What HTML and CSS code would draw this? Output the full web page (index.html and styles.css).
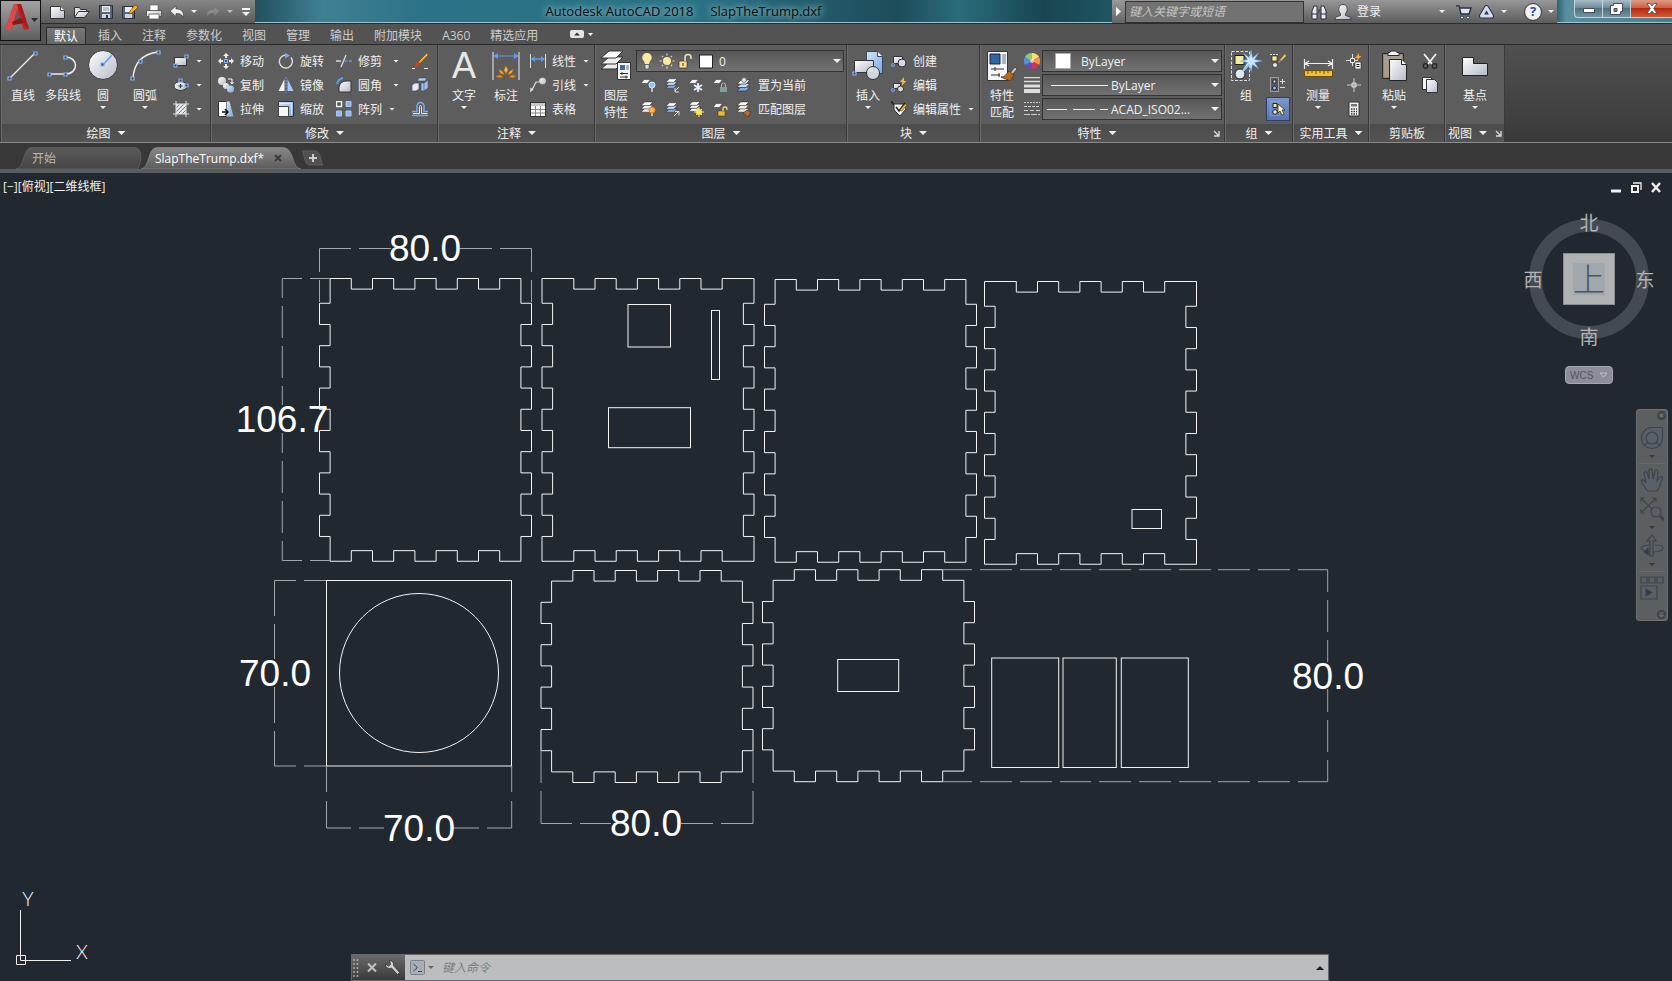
FILE: index.html
```html
<!DOCTYPE html>
<html lang="zh-CN">

<head>
    <meta charset="utf-8">
    <title>Autodesk AutoCAD 2018 SlapTheTrump.dxf</title>
    <link rel="stylesheet" href="styles.css">
</head>

<body>
    <!-- shared gradients and icon parts -->
    <svg class="defs" width="0" height="0" aria-hidden="true">
        <defs>
            <linearGradient id="silver" x1="0" y1="0" x2="1" y2="1">
                <stop offset="0" stop-color="#ffffff" />
                <stop offset="1" stop-color="#b4bac8" />
            </linearGradient>
            <linearGradient id="blue" x1="0" y1="0" x2="1" y2="1">
                <stop offset="0" stop-color="#d5e6fb" />
                <stop offset="1" stop-color="#7da7e0" />
            </linearGradient>
            <linearGradient id="gold" x1="0" y1="0" x2="0" y2="1">
                <stop offset="0" stop-color="#ffd75a" />
                <stop offset="1" stop-color="#e08a12" />
            </linearGradient>
            <linearGradient id="tabOff" x1="0" y1="0" x2="0" y2="1">
                <stop offset="0" stop-color="#5a5a5a" />
                <stop offset="1" stop-color="#454545" />
            </linearGradient>
            <linearGradient id="tabOn" x1="0" y1="0" x2="0" y2="1">
                <stop offset="0" stop-color="#888888" />
                <stop offset="1" stop-color="#5c5c5c" />
            </linearGradient>
            <symbol id="node" viewBox="0 0 5 5">
                <path d="M1 1h3v3h-3z" fill="#3a4454" stroke="#86b4f7" stroke-width="1.2" />
            </symbol>
            <symbol id="sheet" viewBox="0 0 16 16">
                <path d="M5 3h8l-4 5h-8z" fill="#f4f4f4" stroke="#333" stroke-width=".7" />
            </symbol>
            <symbol id="sheets" viewBox="0 0 16 16">
                <path d="M5 9h9l-4 4h-9z" fill="#f4f4f4" stroke="#333" stroke-width=".7" />
                <path d="M5 5.500h9l-4 4h-9z" fill="#f4f4f4" stroke="#333" stroke-width=".7" />
                <path d="M5 2h9l-4 4h-9z" fill="#fff" stroke="#333" stroke-width=".7" />
            </symbol>
            <symbol id="sheetsBlue" viewBox="0 0 16 16">
                <path d="M5 9h9l-4 4h-9z" fill="#7fabe8" stroke="#333" stroke-width=".7" />
                <path d="M5 5.500h9l-4 4h-9z" fill="#c9dcf5" stroke="#333" stroke-width=".7" />
                <path d="M5 2h9l-4 4h-9z" fill="#fff" stroke="#333" stroke-width=".7" />
            </symbol>
        </defs>
    </svg>

    <header class="top">
        <button class="app-button" aria-label="应用程序菜单">
            <svg width="39" height="39" viewBox="0 0 39 39">
                <path d="M4 29L13 3h7l8 25-5 1-3-7-8 2-2 5z" fill="#c4262c" />
                <path d="M13 3l5 1-8 25H4z" fill="#e0474a" />
                <path d="M11 21l9-4 3 5-11 2z" fill="#8d1519" />
                <path d="M16 9l3 8-6 3z" fill="#62595a" />
                <path d="M20 3l8 25-4-3-8-21z" fill="#a51b20" />
                <path d="M30 17h7l-3.500 4z" fill="#222b38" />
            </svg>
        </button>

        <div class="titlebar">
            <div class="quick">
                <button aria-label="新建"><svg width="18" height="16" viewBox="0 0 18 16"><path d="M1.500 2.500h10l4 4v8h-14z" fill="url(#silver)" stroke="#333" /><path d="M11.500 2.500v4h4" fill="#fff" stroke="#555" /></svg></button>
                <button aria-label="打开"><svg width="18" height="16" viewBox="0 0 18 16"><path d="M1.500 13.500v-10h5l1 2h6v2" fill="#dfe3ea" stroke="#333" /><path d="M1.500 13.500l4-6h11l-5 6z" fill="url(#silver)" stroke="#333" /></svg></button>
                <button aria-label="保存"><svg width="18" height="16" viewBox="0 0 18 16"><path d="M2.500 1.500h13v13h-13z" fill="#5d6676" stroke="#2b2f38" /><path d="M5 2h8v6h-8z" fill="#eceff4" /><path d="M6 4h6M6 6h6" stroke="#8a93a3" /><path d="M5 10h8v4h-8z" fill="#cfd5df" /><path d="M9 11h2v3h-2z" fill="#2b2f38" /></svg></button>
                <button aria-label="另存为"><svg width="18" height="16" viewBox="0 0 18 16"><path d="M1.500 2.500h12v12h-12z" fill="#5d6676" stroke="#2b2f38" /><path d="M4 3h7v5h-7z" fill="#eceff4" /><path d="M4 10h7v4h-7z" fill="#cfd5df" /><path d="M8 10l1-3 5-6 3 2-6 6z" fill="#f0b429" stroke="#7a4a0c" stroke-width=".7" /></svg></button>
                <button aria-label="打印"><svg width="18" height="16" viewBox="0 0 18 16"><path d="M5 1h8v6h-8z" fill="#fff" stroke="#666" stroke-width=".7" /><path d="M1.500 6.500h15v6h-15z" fill="url(#silver)" stroke="#444" stroke-width=".8" /><path d="M4 10h10v5h-10z" fill="#fff" stroke="#555" stroke-width=".8" /></svg></button>
                <button aria-label="放弃"><svg width="16" height="16" viewBox="0 0 16 16"><path d="M1 7l6-5v3c5 0 8 2 7.500 9-1.500-3.500-3-4.500-7.500-4.500v3z" fill="#f2f2f2" stroke="#444" stroke-width=".7" /></svg></button>
                <i class="caret"></i>
                <button class="dim" aria-label="重做"><svg width="16" height="16" viewBox="0 0 16 16"><path d="M15 7l-6-5v3c-5 0-8 2-7.500 9 1.500-3.500 3-4.500 7.500-4.500v3z" fill="#9b9b9b" stroke="#666" stroke-width=".7" /></svg></button>
                <i class="caret dim"></i>
                <button aria-label="自定义快速访问工具栏"><svg width="10" height="10" viewBox="0 0 10 10"><path d="M1 1h8v2h-8zM1 5h8l-4 4z" fill="#f5f5f5" /></svg></button>
            </div>
            <div class="aero caption"><span>Autodesk AutoCAD 2018</span><span>SlapTheTrump.dxf</span></div>
            <div class="infocenter">
                <button class="fold" aria-label="折叠搜索"><svg width="5" height="9" viewBox="0 0 5 9"><path d="M0 0l5 4.500-5 4.500z" fill="#fff" /></svg></button>
                <input type="search" class="search" aria-label="搜索" placeholder="键入关键字或短语">
                <button aria-label="查找"><svg width="18" height="16" viewBox="0 0 18 16"><path d="M2 15V7l2-5h3v13zM11 15V2h3l2 5v8z" fill="#e7ebf1" stroke="#2c2f36" /><path d="M7 5h4v4h-4z" fill="#555b66" /><path d="M2 10h5M11 10h5" stroke="#2c2f36" /></svg></button>
                <button class="login"><svg width="18" height="16" viewBox="0 0 18 16"><path d="M1 15.500c0-3 3-3 5.500-4l0-2c-3-3-2-9 2.500-9s5.500 6 2.500 9l0 2c2.500 1 5.500 1 5.500 4z" fill="url(#silver)" stroke="#333" stroke-width=".8" /></svg>登录</button>
                <i class="caret"></i>
                <button class="cart" aria-label="Autodesk App Store"><svg width="17" height="16" viewBox="0 0 17 16"><path d="M1 2h3l2 8h8l2-6h-11" fill="#dfe4ee" stroke="#26314f" stroke-width="1.400" /><circle cx="7" cy="13.500" r="1.500" fill="#fff" stroke="#26314f" /><circle cx="13" cy="13.500" r="1.500" fill="#fff" stroke="#26314f" /></svg></button>
                <button aria-label="Autodesk 360"><svg width="17" height="16" viewBox="0 0 17 16"><path d="M8.500 3.500l5 8.500h-10z" fill="none" stroke="#26314f" stroke-width="5" stroke-linejoin="round" /><path d="M8.500 3.500l5 8.500h-10z" fill="none" stroke="#d5dcea" stroke-width="3" stroke-linejoin="round" /></svg></button>
                <i class="caret"></i>
                <button class="help" aria-label="帮助">?</button>
                <i class="caret"></i>
            </div>
            <div class="aero window-buttons">
                <button aria-label="最小化"><svg width="12" height="12" viewBox="0 0 12 12"><path d="M.5 5.500h11v4h-11z" fill="#fff" stroke="#434b5c" /></svg></button>
                <button aria-label="还原"><svg width="13" height="12" viewBox="0 0 13 12"><path d="M3.500.5h9v8h-2v3h-10v-9h3z" fill="#fff" stroke="#434b5c" /><path d="M4 5.500h3v3h-3z" fill="#75879c" stroke="#434b5c" /></svg></button>
                <button class="close" aria-label="关闭"><svg width="12" height="11" viewBox="0 0 12 11"><path d="M1 .5h3l2 2.500 2-2.500h3l-3.300 5 3.300 5h-3l-2-2.500-2 2.500h-3l3.300-5z" fill="#fff" stroke="#54403f" stroke-width=".8" /></svg></button>
            </div>
        </div>

        <nav class="ribbon-tabs">
            <a href="#" class="active">默认</a>
            <a href="#">插入</a>
            <a href="#">注释</a>
            <a href="#">参数化</a>
            <a href="#">视图</a>
            <a href="#">管理</a>
            <a href="#">输出</a>
            <a href="#">附加模块</a>
            <a href="#">A360</a>
            <a href="#">精选应用</a>
            <button aria-label="最小化功能区"><svg width="24" height="8" viewBox="0 0 24 8"><rect width="14" height="8" rx="2" fill="#e6e6e6" /><path d="M4 5.500h6l-3-3z" fill="#333" /><path d="M18 3h5l-2.500 3z" fill="#fff" /></svg></button>
        </nav>
    </header>

    <main class="ribbon">
        <section class="panel draw">
            <div class="tools">
                <button class="big"><svg width="32" height="32" viewBox="0 0 32 32"><path d="M3 29L28 4" stroke="#eee" stroke-width="1.300" /><use href="#node" x="0" y="27" width="5" height="5" /><use href="#node" x="26" y="2" width="5" height="5" /></svg>直线</button>
                <button class="big"><svg width="32" height="32" viewBox="0 0 32 32"><path d="M2 25h16c14 0 14-17 0-17" fill="none" stroke="#eee" stroke-width="1.500" /><use href="#node" x="0" y="23" width="5" height="5" /><use href="#node" x="16" y="23" width="5" height="5" /><use href="#node" x="16" y="6" width="5" height="5" /></svg>多段线</button>
                <button class="big"><svg width="32" height="32" viewBox="0 0 32 32"><circle cx="16" cy="16" r="14.500" fill="url(#silver)" stroke="#3b3b3b" /><path d="M16 16l9-10" stroke="#5d9cf3" stroke-width="1.500" /><use href="#node" x="13" y="13" width="5" height="5" /></svg>圆<i class="caret"></i></button>
                <button class="big arc"><svg width="32" height="32" viewBox="0 0 32 32"><path d="M4 29C5 14 14 5 29 3" fill="none" stroke="#eee" stroke-width="1.500" /><use href="#node" x="1" y="27" width="5" height="5" /><use href="#node" x="9" y="10" width="5" height="5" /><use href="#node" x="27" y="1" width="5" height="5" /></svg>圆弧<i class="caret"></i></button>
                <div class="rows">
                    <button class="tool" aria-label="矩形"><svg width="16" height="16" viewBox="0 0 16 16"><path d="M1.500 4.500h12v8h-12z" fill="url(#silver)" stroke="#333" /><use href="#node" x="11" y="1" width="5" height="5" /><use href="#node" x="0" y="10" width="5" height="5" /></svg><i class="caret"></i></button>
                    <button class="tool" aria-label="椭圆"><svg width="16" height="16" viewBox="0 0 16 16"><ellipse cx="7.500" cy="9" rx="6.500" ry="4.500" fill="url(#silver)" stroke="#333" /><path d="M5.500 9h4M7.500 7v4" stroke="#333" /><use href="#node" x="5" y="1" width="5" height="5" /><use href="#node" x="11" y="6" width="5" height="5" /></svg><i class="caret"></i></button>
                    <button class="tool" aria-label="图案填充"><svg width="16" height="16" viewBox="0 0 16 16"><path d="M3 3h10v10h-10z" fill="#e3e8f2" /><path d="M3 7l4-4M3 11l8-8M5 13l8-8M9 13l4-4" stroke="#4b7fd0" /><path d="M3 0v16M13 0v16M0 3h16M0 13h16" stroke="#ddd" /></svg><i class="caret"></i></button>
                </div>
            </div>
            <h2><button>绘图<i class="caret wide"></i></button></h2>
        </section>

        <section class="panel modify">
            <div class="tools">
                <div class="rows four">
                    <button class="tool"><svg width="16" height="16" viewBox="0 0 16 16"><path d="M8 0l3 3h-6zM8 16l3-3h-6zM0 8l3-3v6zM16 8l-3-3v6z" fill="#eee" /><path d="M8 3v2M8 11v2M3 8h2M11 8h2" stroke="#eee" stroke-width="2" /><use href="#node" x="5.500" y="5.500" width="5" height="5" /></svg>移动</button>
                    <button class="tool"><svg width="16" height="16" viewBox="0 0 16 16"><path d="M8 2a6.500 6.500 0 1 0 5 2.500" fill="none" stroke="#ddd" stroke-width="1.400" /><path d="M7 0l5 2.500-5 3z" fill="#78a9f0" /></svg>旋转</button>
                    <button class="tool"><svg width="16" height="16" viewBox="0 0 16 16"><path d="M0 8h5M5 14L10 2" stroke="#ddd" stroke-width="1.300" fill="none" /><path d="M8.500 8h3M13 8h3" stroke="#5d9cf3" stroke-width="1.500" /></svg>修剪<i class="caret"></i></button>
                    <button class="tool" aria-label="删除"><svg width="16" height="16" viewBox="0 0 16 16"><path d="M0 15.500h3M12 15.500h4" stroke="#eee" /><path d="M15 0l1 2-8 9-2-2z" fill="url(#gold)" stroke="#5a3508" stroke-width=".5" /><path d="M8 11l-2-2c-2 0-3 3-4 5 3 0 5-1 6-3z" fill="#c5471c" /></svg></button>
                    <button class="tool"><svg width="16" height="16" viewBox="0 0 16 16"><circle cx="4" cy="4" r="4" fill="url(#silver)" /><circle cx="8" cy="9" r="3" fill="url(#silver)" /><circle cx="12.500" cy="12" r="3.500" fill="url(#blue)" /><path d="M10 2h4v4M12.500 5l1.500 2 1.500-2" fill="none" stroke="#fff" /></svg>复制</button>
                    <button class="tool"><svg width="16" height="16" viewBox="0 0 16 16"><path d="M6.500 2v12h-6z" fill="#f1f1f1" /><path d="M9.500 2v12h6z" fill="#a9c8f2" /><path d="M8 0v16" stroke="#5d9cf3" stroke-dasharray="2 1" /></svg>镜像</button>
                    <button class="tool"><svg width="16" height="16" viewBox="0 0 16 16"><path d="M3 15V10a7 7 0 0 1 7-6h5v11z" fill="url(#silver)" stroke="#333" /><path d="M1 7a8 8 0 0 1 6-6" fill="none" stroke="#5d9cf3" stroke-width="2" /></svg>圆角<i class="caret"></i></button>
                    <button class="tool" aria-label="分解"><svg width="16" height="16" viewBox="0 0 16 16"><path d="M0 8l3-2h4v6l-3 2h-4z" fill="#e4e9f3" stroke="#345" stroke-width=".6" /><path d="M5 4l2-3h8l-2 3z" fill="#b7cdf0" stroke="#345" stroke-width=".6" /><path d="M9 6h3l4-3v8l-4 3h-3z" fill="#a4c2ee" stroke="#345" stroke-width=".6" /><path d="M12 6v8" stroke="#345" stroke-width=".6" /></svg></button>
                    <button class="tool"><svg width="16" height="16" viewBox="0 0 16 16"><path d="M.5.5h8v15h-8z" fill="#fff" stroke="#333" /><path d="M8.500.5l3 0 4 15h-7z" fill="url(#blue)" /><path d="M4 11h5M7 8l3 3-3 3" fill="none" stroke="#111" stroke-width="1.500" /></svg>拉伸</button>
                    <button class="tool"><svg width="16" height="16" viewBox="0 0 16 16"><path d="M.5.5h15v15h-15z" fill="url(#blue)" stroke="#333" /><path d="M.5 5.500h10v10h-10z" fill="#f7f7f7" stroke="#444" /><path d="M2 2.500h11.500v11" fill="none" stroke="#dcebff" /></svg>缩放</button>
                    <button class="tool tight"><svg width="16" height="16" viewBox="0 0 16 16"><path d="M.5.5h5v5h-5z" fill="#555" stroke="#f2f2f2" stroke-width="1.500" /><path d="M10 .5h5v5h-5zM.5 10h5v5h-5zM10 10h5v5h-5z" fill="#8db7f0" stroke="#a8caf7" /></svg>阵列<i class="caret"></i></button>
                    <button class="tool" aria-label="偏移"><svg width="16" height="16" viewBox="0 0 16 16"><path d="M0 14.500h16M0 11.500v-1h5V5a3.500 3.500 0 0 1 7 0v5.500h4" fill="none" stroke="#79a9ef" stroke-width="1.500" /><path d="M1 12.500h6.500V5.500a1 1 0 0 1 2 0v7h6" fill="none" stroke="#e6e6e6" /></svg></button>
                </div>
            </div>
            <h2><button>修改<i class="caret wide"></i></button></h2>
        </section>

        <section class="panel annotate">
            <div class="tools">
                <button class="big"><svg width="32" height="32" viewBox="0 0 32 32"><text x="16" y="29" class="glyph-a">A</text></svg>文字<i class="caret"></i></button>
                <button class="big"><svg width="32" height="32" viewBox="0 0 32 32"><path d="M3 3v28M29 3v28" stroke="#ccc" stroke-width="1.300" /><path d="M4 7h24M8 4.500L4 7l4 2.500M24 4.500L28 7l-4 2.500" stroke="#5d9cf3" fill="#5d9cf3" /><path d="M16 17l2 4-2 4-2-4zM9 20l4 3 1 3-4-2zM23 20l-4 3-1 3 4-2zM6 27l4-1 3 2-4 1zM26 27l-4-1-3 2 4 1z" fill="url(#gold)" stroke="#c85a10" stroke-width=".5" /></svg>标注</button>
                <div class="rows">
                    <button class="tool"><svg width="16" height="16" viewBox="0 0 16 16"><path d="M.5 1v14M15.500 1v14" stroke="#ddd" /><path d="M2 6h12" stroke="#5d9cf3" stroke-width="1.500" /><path d="M1 6l4-3v6zM15 6l-4-3v6z" fill="#5d9cf3" /></svg>线性<i class="caret"></i></button>
                    <button class="tool"><svg width="16" height="16" viewBox="0 0 16 16"><circle cx="12.500" cy="4" r="3" fill="url(#silver)" stroke="#ccc" /><path d="M9 5h-3l-4 8" stroke="#ddd" fill="none" stroke-width="1.200" /><path d="M0 15.500l.5-5 3 2z" fill="#ddd" /></svg>引线<i class="caret"></i></button>
                    <button class="tool"><svg width="16" height="16" viewBox="0 0 16 16"><path d="M.5 1.500h15v14h-15z" fill="#f6f6f6" stroke="#333" /><path d="M1 2h14v3h-14z" fill="#c2c6cf" /><path d="M5.500 5v10M10.500 5v10M1 8.500h14M1 12h14" stroke="#888" /></svg>表格</button>
                </div>
            </div>
            <h2><button>注释<i class="caret wide"></i></button></h2>
        </section>

        <section class="panel layers">
            <div class="tools">
                <button class="big"><svg width="32" height="32" viewBox="0 0 32 32"><path d="M8 14h14l-6 6h-15z" fill="#eee" stroke="#333" /><path d="M9 8h14l-7 7h-15z" fill="#eee" stroke="#333" /><path d="M9 2h14l-7 7h-15z" fill="#fff" stroke="#333" /><path d="M17.500 13.500h13v17h-13z" fill="#f5f7fa" stroke="#333" /><path d="M20 16h5v5h-5z" fill="#3b6da8" /><path d="M26 16h3v5h-3z" fill="#aab6c8" /><path d="M20 24.500h8M20 28h8M22 23v3M26 26.500v3" stroke="#333" /></svg>图层<br>特性</button>
                <div class="layer-side">
                    <label class="combo">
                        <svg width="76" height="18" viewBox="0 0 76 18"><path d="M7 1a4.500 4.500 0 0 1 3 8l-1 3h-4l-1-3a4.500 4.500 0 0 1 3-8z" fill="#ffe9a0" /><path d="M5 12.500h4v3l-2 2-2-2z" fill="#ddd" stroke="#444" stroke-width=".6" /><circle cx="27" cy="9" r="4" fill="#ffe9a0" /><path d="M27 1.500v2M27 14.500v2M19.500 9h2M32.500 9h2M22 4l1 1M31 13l1 1M32 4l-1 1M22 14l1-1" stroke="#ddd" stroke-width="1.200" /><path d="M39 9h8v7h-8z" fill="#ffe08a" stroke="#333" stroke-width=".7" /><path d="M45 9V5.500a3 3 0 0 1 6 0V7" fill="none" stroke="#f0e4b8" stroke-width="1.500" /><path d="M43 11v3" stroke="#333" /><path d="M59.500 3h13v13h-13z" fill="#fff" stroke="#222" /></svg>
                        <select aria-label="图层"><option>0</option></select>
                    </label>
                    <div class="icon-row">
                        <button aria-label="关"><svg width="16" height="16"><use href="#sheet" width="13" height="13" /><circle cx="12" cy="8" r="3" fill="#8fc1ff" stroke="#dcebff" /><path d="M12 11v4" stroke="#ddd" stroke-width="1.500" /></svg></button>
                        <button aria-label="隔离"><svg width="16" height="16"><use href="#sheetsBlue" width="16" height="14" /><path d="M15 10l-4 4M11 11v4h4" stroke="#ddd" fill="none" /></svg></button>
                        <button aria-label="冻结"><svg width="16" height="16"><use href="#sheet" width="13" height="13" /><path d="M10 6v9M6 8l8 5M14 8l-8 5" stroke="#e8f1ff" stroke-width="1.800" /></svg></button>
                        <button aria-label="锁定"><svg width="16" height="16"><use href="#sheet" width="13" height="13" /><path d="M8 10h7v5h-7z" fill="#7fa09c" /><path d="M9.500 10v-2a2 2 0 0 1 4 0v2" fill="none" stroke="#9fbab6" /></svg></button>
                        <button class="tool"><svg width="16" height="16"><use href="#sheetsBlue" width="16" height="16" y="1" /><circle cx="8" cy="3" r="2.500" fill="#dbe1ea" stroke="#444" stroke-width=".6" /></svg>置为当前</button>
                    </div>
                    <div class="icon-row">
                        <button aria-label="打开所有图层"><svg width="16" height="16"><use href="#sheets" width="15" height="15" y="-1" /><circle cx="12" cy="9" r="3" fill="#ffb347" stroke="#f07d1a" /><path d="M12 12v3" stroke="#ddd" stroke-width="1.500" /></svg></button>
                        <button aria-label="取消隔离"><svg width="16" height="16"><use href="#sheetsBlue" width="16" height="14" /><path d="M10 15l4-4M11 10.500h4v4" stroke="#ddd" fill="none" /></svg></button>
                        <button aria-label="解冻所有图层"><svg width="16" height="16"><use href="#sheets" width="14" height="14" y="-1" /><circle cx="11" cy="11" r="3" fill="#ffe45c" /><path d="M11 6v2M11 14v2M6 11h2M14 11h2M8 8l1 1M14 8l-1 1M8 14l1-1M14 14l-1-1" stroke="#ffe45c" /></svg></button>
                        <button aria-label="解锁"><svg width="16" height="16"><use href="#sheet" width="13" height="13" /><path d="M6 10h7v5h-7z" fill="#f5b52c" stroke="#333" stroke-width=".5" /><path d="M11 10v-2a2 2 0 0 1 4 0v1" fill="none" stroke="#ffd25e" stroke-width="1.300" /></svg></button>
                        <button class="tool"><svg width="16" height="16"><use href="#sheets" width="15" height="15" y="-1" /><path d="M7 12l4-3 4 2-3 5z" fill="#b56a2c" stroke="#4a2a10" stroke-width=".6" /></svg>匹配图层</button>
                    </div>
                </div>
            </div>
            <h2><button>图层<i class="caret wide"></i></button></h2>
        </section>

        <section class="panel block">
            <div class="tools">
                <button class="big"><svg width="32" height="32" viewBox="0 0 32 32"><path d="M14.500 2.500h11l5 5v17h-16z" fill="url(#blue)" stroke="#37475f" /><path d="M25.500 2.500v5h5" fill="#fff" stroke="#37475f" /><path d="M2.500 11.500h19v12h-19z" fill="url(#silver)" stroke="#333" /><circle cx="21" cy="24" r="6.500" fill="#dfe3ea" fill-opacity=".9" stroke="#333" /><use href="#node" x="0" y="22" width="5" height="5" /></svg>插入<i class="caret"></i></button>
                <div class="rows">
                    <button class="tool"><svg width="16" height="16" viewBox="0 0 16 16"><path d="M2.500 3.500h9v7h-9z" fill="url(#silver)" stroke="#333" /><circle cx="11" cy="10" r="4" fill="#d5d9e1" stroke="#333" /><use href="#node" x="0" y="10" width="4" height="4" /></svg>创建</button>
                    <button class="tool"><svg width="16" height="16" viewBox="0 0 16 16"><path d="M2.500 6.500h7v5h-7z" fill="url(#silver)" stroke="#333" /><circle cx="9.500" cy="12" r="3" fill="#d5d9e1" stroke="#333" /><path d="M13 0l-4 5h2.500l-1 4 5-5h-2.500z" fill="#ffb52e" /><use href="#node" x="0" y="11" width="4" height="4" /></svg>编辑</button>
                    <button class="tool"><svg width="16" height="16" viewBox="0 0 16 16"><path d="M0 0l3 4" stroke="#222" stroke-width="1.500" /><path d="M3 3h10l2 5-6 7-6-6z" fill="#f3f3f3" stroke="#333" /><path d="M5 6l3 4 6-8" stroke="#222" stroke-width="1.500" fill="none" /><path d="M9 9l5-6 2 1-5 6z" fill="#f2b43a" stroke="#7b430c" stroke-width=".6" /></svg>编辑属性<i class="caret"></i></button>
                </div>
            </div>
            <h2><button>块<i class="caret wide"></i></button></h2>
        </section>

        <section class="panel props">
            <div class="tools">
                <button class="big"><svg width="32" height="32" viewBox="0 0 32 32"><path d="M1.500 2.500h20v29h-20z" fill="#f3f5f9" stroke="#333" /><path d="M4 5h10v10h-10z" fill="#2f66a5" stroke="#223" /><path d="M16 5h4v10h-4z" fill="#a9b4c6" /><path d="M5 20h13M5 26h9M9 18v4M13 24v4" stroke="#333" /><path d="M29 18l2 2-5 6-2-2z" fill="#d8c4a8" stroke="#333" stroke-width=".7" /><path d="M23 22l5 4-4 6-9-4c4 0 5-3 8-6z" fill="#b8691f" stroke="#4a2608" stroke-width=".7" /></svg>特性<br>匹配</button>
                <div class="prop-grid">
                    <svg width="16" height="16" viewBox="0 0 16 16"><path d="M8 8V0a8 8 0 0 1 7 4z" fill="#ffe06a" /><path d="M8 8l7-4a8 8 0 0 1 0 8z" fill="#f0944e" /><path d="M8 8l7 4a8 8 0 0 1-7 4z" fill="#d2335c" /><path d="M8 8v8a8 8 0 0 1-7-4z" fill="#6f49b8" /><path d="M8 8l-7 4a8 8 0 0 1 0-8z" fill="#4d95dd" /><path d="M8 8L1 4a8 8 0 0 1 7-4z" fill="#8dcc6a" /><circle cx="8" cy="8" r="2" fill="#fff" opacity=".6" /></svg>
                    <label class="combo">
                        <svg width="30" height="16" viewBox="0 0 30 16"><path d="M8.500.5h15v15h-15z" fill="#fff" stroke="#aaa" /></svg>
                        <select aria-label="对象颜色"><option>ByLayer</option></select>
                    </label>
                    <svg width="16" height="16" viewBox="0 0 16 16"><path d="M0 .5h16M0 4.500h16" stroke="#ddd" stroke-width="1.500" /><path d="M0 9h16" stroke="#ddd" stroke-width="3" /><path d="M0 14h16" stroke="#ddd" stroke-width="4" /></svg>
                    <label class="combo">
                        <svg width="61" height="16" viewBox="0 0 61 16"><path d="M4 8.500h57" stroke="#eee" /></svg>
                        <select aria-label="线宽"><option>ByLayer</option></select>
                    </label>
                    <svg width="16" height="16" viewBox="0 0 16 16"><path d="M0 1.500h16" stroke="#ccc" stroke-dasharray="2 1" /><path d="M0 5.500h16" stroke="#ccc" stroke-dasharray="3 1" /><path d="M0 9.500h16" stroke="#ccc" stroke-dasharray="4 2" /><path d="M0 13.500h16" stroke="#ccc" stroke-dasharray="6 1" /></svg>
                    <label class="combo">
                        <svg width="61" height="16" viewBox="0 0 61 16"><path d="M0 8.500h20M26 8.500h22M53 8.500h8" stroke="#eee" /></svg>
                        <select aria-label="线型"><option>ACAD_ISO02...</option></select>
                    </label>
                </div>
            </div>
            <h2><button>特性<i class="caret wide"></i></button><button class="launcher" aria-label="特性选项板"><svg width="7" height="7" viewBox="0 0 7 7"><path d="M1 1l4 4M6 1v5h-5" fill="none" stroke="#ddd" stroke-width="1.300" /></svg></button></h2>
        </section>

        <section class="panel group">
            <div class="tools">
                <button class="big"><svg width="32" height="32" viewBox="0 0 32 32"><path d="M1.500 2.500h18v29h-18z" fill="none" stroke="#ddd" stroke-dasharray="3 1.500" /><path d="M5 6.500h9v9h-9z" fill="#f4ec9a" stroke="#222" /><circle cx="10" cy="25" r="5" fill="#dbe8ee" stroke="#222" /><path d="M13 22l8-9" stroke="#9fd0ff" stroke-width="2" /><path d="M21 1l1.500 8 6-5-4 6.500 8 1.500-8 1.500 4 6-6-4-1.500 7-1.500-7-6 4 4-6-7-1.500 7-1.500-4-6.500 6 5z" fill="#c8e6ff" stroke="#5ba6ee" stroke-width=".5" /></svg>组</button>
                <div class="rows">
                    <button class="tool" aria-label="解除编组"><svg width="16" height="16" viewBox="0 0 16 16"><path d="M0 1.500h9" stroke="#ddd" stroke-dasharray="2 1" /><path d="M2 3h5v5h-5z" fill="#f4ec9a" stroke="#222" stroke-width=".7" /><circle cx="5" cy="12" r="2.500" fill="#dbe8ee" stroke="#222" stroke-width=".7" /><path d="M15 1l1 2-5 5-1-1z" fill="#ffc94a" /><path d="M10 7l1 1-2 2-1-1z" fill="#e66" /></svg></button>
                    <button class="tool" aria-label="组编辑"><svg width="16" height="16" viewBox="0 0 16 16"><path d="M.5.5h8v14h-8z" fill="none" stroke="#ddd" stroke-dasharray="1 1" /><path d="M3 3h3v3h-3z" fill="#eee" stroke="#222" /><circle cx="4.500" cy="11" r="2" fill="#8fc1ff" stroke="#124" /><path d="M10 4.500h5M12.500 2v5M10 10.500h5" stroke="#ddd" /></svg></button>
                    <button class="tool pressed" aria-label="启用/禁用组选择"><svg width="16" height="16" viewBox="0 0 16 16"><path d="M.5.5h9v14h-9z" fill="none" stroke="#78b0ff" stroke-dasharray="1 1" /><path d="M3 2.500h4v4h-4z" fill="#f4ec9a" stroke="#222" /><circle cx="5" cy="11" r="2.300" fill="#dbe8ee" stroke="#222" /><path d="M8 3v9l2-2 2 4 2-1-2-4h3z" fill="#fdf6c8" stroke="#222" stroke-width=".7" /></svg></button>
                </div>
            </div>
            <h2><button>组<i class="caret wide"></i></button></h2>
        </section>

        <section class="panel utils">
            <div class="tools">
                <button class="big"><svg width="32" height="32" viewBox="0 0 32 32"><path d="M2.500 10v10M30.500 10v10M3 14.500h27M7 12l-4 2.500 4 2.500M26 12l4 2.500-4 2.500" stroke="#eee" fill="none" stroke-width="1.200" /><path d="M2.500 21.500h28v6h-28z" fill="#f0c232" stroke="#6b4f0a" /><path d="M6 22v3M10 22v2M14 22v3M18 22v2M22 22v3M26 22v2" stroke="#6b4f0a" /></svg>测量<i class="caret"></i></button>
                <div class="rows">
                    <button class="tool" aria-label="快速选择"><svg width="16" height="16" viewBox="0 0 16 16"><path d="M0 7.500h12M6.500 1v12" stroke="#ddd" /><path d="M4.500 5.500h4v4h-4z" fill="#4c4c4c" stroke="#fff" /><path d="M13 0l-4 5h2.500l-1 3 5-5h-2.500z" fill="#ffa52e" /><path d="M9 9h6v7h-6z" fill="#f4f4f4" stroke="#222" stroke-width=".6" /><path d="M10.500 11.500h3M10.500 13.500h3" stroke="#222" /></svg></button>
                    <button class="tool" aria-label="点样式"><svg width="16" height="16" viewBox="0 0 16 16"><path d="M1 8h14M8 1v14" stroke="#ccc" /><path d="M6 6h4v4h-4z" fill="#aaa" stroke="#ddd" /></svg></button>
                    <button class="tool" aria-label="快速计算器"><svg width="16" height="16" viewBox="0 0 16 16"><path d="M3 1h10v14h-10z" fill="#f1f1f1" stroke="#333" /><path d="M5 3h6v2.500h-6z" fill="#777" /><path d="M5 8h6M5 10.500h6M5 13h6" stroke="#333" stroke-dasharray="1.500 1" stroke-width="1.300" /></svg></button>
                </div>
            </div>
            <h2><button>实用工具<i class="caret wide"></i></button></h2>
        </section>

        <section class="panel clip">
            <div class="tools">
                <button class="big"><svg width="32" height="32" viewBox="0 0 32 32"><path d="M4.500 4.500h21v25h-21z" fill="#8f8478" stroke="#2e2a26" /><path d="M6 6h18v22h-18z" fill="#a89c8e" /><path d="M10 3.500h2l1-1.500h5l1 1.500h2v3h-11z" fill="#f5f5f5" stroke="#2a2a2a" /><path d="M11.500 10.500h12l5 5v16h-17z" fill="url(#silver)" stroke="#222" /><path d="M23.500 10.500v5h5" fill="#fff" stroke="#222" /></svg>粘贴<i class="caret"></i></button>
                <div class="rows">
                    <button class="tool" aria-label="剪切"><svg width="16" height="16" viewBox="0 0 16 16"><path d="M2 1l8 10M14 1L6 11" stroke="#f1f1f1" stroke-width="1.800" /><circle cx="3.500" cy="13" r="2.300" fill="none" stroke="#222" stroke-width="1.200" /><circle cx="12.500" cy="13" r="2.300" fill="none" stroke="#222" stroke-width="1.200" /></svg></button>
                    <button class="tool" aria-label="复制剪裁"><svg width="16" height="16" viewBox="0 0 16 16"><path d="M.5.5h9v12h-9z" fill="#f5f5f5" stroke="#333" /><path d="M4.500 2.500h8l3 3v10h-11z" fill="url(#silver)" stroke="#333" /></svg></button>
                </div>
            </div>
            <h2><button>剪贴板</button></h2>
        </section>

        <section class="panel view">
            <div class="tools">
                <button class="big"><svg width="32" height="32" viewBox="0 0 32 32"><path d="M3.500 8.500h11v6h14v12h-25z" fill="url(#silver)" stroke="#222" /></svg>基点<i class="caret"></i></button>
            </div>
            <h2><button>视图<i class="caret wide"></i></button><button class="launcher" aria-label="视图选项"><svg width="7" height="7" viewBox="0 0 7 7"><path d="M1 1l4 4M6 1v5h-5" fill="none" stroke="#ddd" stroke-width="1.300" /></svg></button></h2>
        </section>
    </main>

    <nav class="file-tabs">
        <a href="#" class="file-tab">
            <svg width="130" height="22" viewBox="0 0 130 22"><path d="M0 22C9 21 6 1 16 .5H118C127 .5 126 13 122 22z" fill="url(#tabOff)" stroke="#6a6a6a" stroke-width=".6" /></svg>
            <span>开始</span>
        </a>
        <a href="#" class="file-tab current">
            <svg width="160" height="22" viewBox="0 0 160 22"><path d="M0 22C9 21 6 1 16 .5H142C154 1 150 21 160 22z" fill="url(#tabOn)" stroke="#999" stroke-width=".5" /></svg>
            <span>SlapTheTrump.dxf*</span>
            <svg class="close-x" width="8" height="8" viewBox="0 0 8 8"><path d="M1 1l6 6M7 1l-6 6" stroke="#3c3c3c" stroke-width="2" /></svg>
        </a>
        <button class="new-tab" aria-label="新图形"><svg width="24" height="16" viewBox="0 0 24 16"><path d="M1 1h13c6 0 6 12 8 14h-13c-6 0-5-10-8-14z" fill="#505050" stroke="#5f5f5f" /><path d="M12 4v8M8 8h8" stroke="#ccc" stroke-width="2" /></svg></button>
    </nav>

    <div class="canvas">
        <svg class="drawing" viewBox="0 173 1672 808" preserveAspectRatio="xMinYMin meet">
            <defs>
                <!-- panel outlines, drawn in millimetres -->
                <path id="panelTabs" d="M4 0h8v4h8v-4h8v4h8v-4h8v4h8v-4h8v4h8v-4h8v9.350h4v8h-4v8h4v8h-4v8h4v8h-4v8h4v8h-4v8h4v8h-4v8h4v8h-4v9.350h-8v-4h-8v4h-8v-4h-8v4h-8v-4h-8v4h-8v-4h-8v4h-8v-9.350h-4v-8h4v-8h-4v-8h4v-8h-4v-8h4v-8h-4v-8h4v-8h-4v-8h4v-8h-4v-8h4z" />
                <path id="panelSlots" d="M0 0h12v4h8v-4h8v4h8v-4h8v4h8v-4h8v4h8v-4h12v9.350h-4v8h4v8h-4v8h4v8h-4v8h4v8h-4v8h4v8h-4v8h4v8h-4v8h4v9.350h-12v-4h-8v4h-8v-4h-8v4h-8v-4h-8v4h-8v-4h-8v4h-12v-9.350h4v-8h-4v-8h4v-8h-4v-8h4v-8h-4v-8h4v-8h-4v-8h4v-8h-4v-8h4v-8h-4z" />
                <path id="lid" d="M4 4h8v-4h8v4h8v-4h8v4h8v-4h8v4h8v-4h8v4h8v8h4v8h-4v8h4v8h-4v8h4v8h-4v8h4v8h-4v8h-8v4h-8v-4h-8v4h-8v-4h-8v4h-8v-4h-8v4h-8v-4h-8v-8h-4v-8h4v-8h-4v-8h4v-8h-4v-8h4v-8h-4v-8h4z" />
            </defs>
            <g class="outline">
                <use href="#panelTabs" transform="translate(319.500 278.500) scale(2.650)" />
                <use href="#panelSlots" transform="translate(542 278.500) scale(2.650)" />
                <use href="#panelTabs" transform="translate(764.500 279.500) scale(2.650)" />
                <use href="#panelSlots" transform="translate(984.500 281.500) scale(2.650)" />
                <use href="#lid" transform="translate(541 570.500) scale(2.650)" />
                <use href="#lid" transform="translate(762.500 569.700) scale(2.650)" />
                <rect x="628" y="304.500" width="42.500" height="42.500" />
                <rect x="711.500" y="310.500" width="8" height="69" />
                <rect x="608.500" y="407.700" width="82" height="40" />
                <rect x="1132" y="509.500" width="29.500" height="19" />
                <rect x="326.500" y="580.500" width="185" height="185.500" />
                <circle cx="419" cy="673" r="79.500" />
                <rect x="837.700" y="659.500" width="61" height="32" />
                <rect x="991.700" y="658" width="67" height="109.500" />
                <rect x="1063" y="658" width="53.300" height="109.500" />
                <rect x="1121.300" y="658" width="67" height="109.500" />
            </g>
            <g class="dimension">
                <path d="M319.500 272V248.500H351M359 248.500H391M460 248.500H492M500 248.500H531.500V272M319.500 280V302M531.500 280V302" />
                <path d="M302 278.500H282.300V298M310 278.500H330M282.300 306V338M282.300 346V378M282.300 386V405M282.300 433V453M282.300 461V493M282.300 501V533M282.300 541V560.500H302M310 560.500H330" />
                <path d="M296 580.500H274.500V616M304 580.500H326M274.500 624V659M274.500 687V723M274.500 731V766H296M304 766H326" />
                <path d="M326.500 766V792M326.500 801V828H351M359 828H384M453 828H479M487 828H511.700V801M511.700 766V792" />
                <path d="M541 750V783M541 791V823.500H572M580 823.500H611M681 823.500H713M721 823.500H753V791M753 750V783" />
                <path d="M942.500 569.700H972M980 569.700H1012M1020 569.700H1052M1060 569.700H1091M1099 569.700H1131M1139 569.700H1171M1179 569.700H1211M1218 569.700H1250M1258 569.700H1290M1298 569.700H1327.700V592M1327.700 600V632M1327.700 640V662M1327.700 689V712M1327.700 720V752M1327.700 760V781.700H1298M1290 781.700H1258M1250 781.700H1218M1211 781.700H1179M1171 781.700H1139M1131 781.700H1099M1091 781.700H1060M1052 781.700H1020M1012 781.700H980M972 781.700H942.500" />
            </g>
            <g class="dimension-text">
                <text x="425" y="261">80.0</text>
                <text x="282" y="432">106.7</text>
                <text x="275" y="686">70.0</text>
                <text x="419" y="841">70.0</text>
                <text x="646" y="836">80.0</text>
                <text x="1328" y="689">80.0</text>
            </g>
            <g class="ucs">
                <path d="M20.500 910v50.500H71M16.500 955.500h9v9h-9z" />
                <text x="28" y="906">Y</text>
                <text x="82" y="959">X</text>
            </g>
        </svg>

        <div class="view-label">[−][俯视][二维线框]</div>

        <div class="doc-buttons">
            <button aria-label="最小化"><svg width="12" height="11" viewBox="0 0 12 11"><path d="M1 7.500h10v3h-10z" fill="#eee" /></svg></button>
            <button aria-label="还原"><svg width="12" height="11" viewBox="0 0 12 11"><path d="M3 1h8v7" fill="none" stroke="#eee" stroke-width="1.300" /><path d="M2 4h6v6h-6z" fill="none" stroke="#eee" stroke-width="2" /></svg></button>
            <button aria-label="关闭"><svg width="12" height="11" viewBox="0 0 12 11"><path d="M2 1l8 9M10 1l-8 9" stroke="#eee" stroke-width="2.500" /></svg></button>
        </div>

        <div class="viewcube">
            <svg width="132" height="152" viewBox="0 -8 132 152">
                <circle cx="66" cy="68" r="53.500" fill="none" stroke="#434a52" stroke-width="13" />
                <rect x="40.500" y="42.500" width="51" height="51" fill="#b0b1b3" stroke="#8b8e92" />
                <rect x="50" y="52" width="32" height="32" fill="#a1a8ad" />
                <text x="66" y="80" class="face">上</text>
                <text x="66" y="19">北</text>
                <text x="66" y="133">南</text>
                <text x="10" y="76">西</text>
                <text x="122" y="76">东</text>
            </svg>
            <button class="wcs">WCS<svg width="9" height="6" viewBox="0 0 9 6"><path d="M1 1h7l-3.500 4z" fill="none" stroke="#bfc0cc" /></svg></button>
        </div>

        <nav class="navbar">
            <button class="corner" aria-label="关闭"><svg width="9" height="9" viewBox="0 0 9 9"><circle cx="4.500" cy="4.500" r="4" fill="#45494d" /><path d="M3 3l3 3M6 3l-3 3" stroke="#73777b" /></svg></button>
            <button aria-label="全导航控制盘"><svg width="24" height="24" viewBox="0 0 24 24"><path d="M12 1.500h10.500v10a10.500 10.500 0 1 1-10.500-10z" /><circle cx="12" cy="12" r="6" /><path d="M7.500 16.500l-3 3M16.500 16.500l3 3" /></svg></button>
            <i class="caret dark"></i>
            <button class="ruled" aria-label="平移"><svg width="24" height="24" viewBox="0 0 24 24"><path d="M8 23c-3-2-4-6-7-10 1-2 3-1 5 2l-2-10c1-2 3-1 3 0l2 6 0-9c1-2 3-1 3 0l1 9 2-8c1-2 3-1 3 1l-1 9 3-4c2-1 3 0 2 2-2 4-2 9-5 12z" /></svg></button>
            <button aria-label="范围缩放"><svg width="24" height="24" viewBox="0 0 24 24"><path d="M1 1l15 15M16 1L1 16M1 5V1h4M12 1h4v4M1 12v4h4" /><circle cx="16" cy="15" r="5" /><path d="M20 19l4 4" stroke-width="3" /></svg></button>
            <i class="caret dark"></i>
            <button aria-label="动态观察"><svg width="24" height="24" viewBox="0 0 24 24"><path d="M9 11c-4 0-8 2-8 3s4 4 11 4 11-2 11-4-4-3-8-3" /><path d="M10 22V7h-3l5-6 4 6h-3v15z" /><path d="M8 14l-4 4 5 3z" fill="#34383c" /></svg></button>
            <i class="caret dark"></i>
            <button class="ruled" aria-label="ShowMotion"><svg width="24" height="24" viewBox="0 0 24 24"><path d="M1 1h6v6h-6zM9 1h6v6h-6zM17 1h6v6h-6zM1 10h16v13h-16z" /><path d="M6 13v7l6-3.500z" fill="#34383c" /></svg></button>
            <button class="corner" aria-label="自定义"><svg width="9" height="9" viewBox="0 0 9 9"><circle cx="4.500" cy="4.500" r="4" fill="#45494d" /><path d="M2.500 3h4M2.500 5h4l-2 2z" stroke="#73777b" stroke-width=".7" /></svg></button>
        </nav>

        <form class="command">
            <div class="command-grip">
                <svg width="6" height="18" viewBox="0 0 6 18"><path d="M1 0v18M4.500 0v18" stroke="#aaa" stroke-width="1.500" stroke-dasharray="2 2" /></svg>
                <button type="button" aria-label="关闭"><svg width="10" height="9" viewBox="0 0 10 9"><path d="M1 .5l8 8M9 .5l-8 8" stroke="#c4c4c4" stroke-width="2" /></svg></button>
                <button type="button" aria-label="自定义"><svg width="15" height="15" viewBox="0 0 15 15"><path d="M4.500.5a4 4 0 0 1 4 5l6 7-2 2-6-6.500a4 4 0 0 1-6-4l3 2 2-1.500z" fill="#cfd1d4" stroke="#222" stroke-width=".7" /></svg></button>
            </div>
            <button type="button" class="recent" aria-label="最近使用的命令"><svg width="24" height="15" viewBox="0 0 24 15"><rect x=".5" y=".5" width="14" height="14" rx="1" fill="#a9adb6" stroke="#7b828c" /><path d="M3.500 4l4 3.500-4 3.500M8 11.500h4" fill="none" stroke="#3b4250" /><path d="M18 6h6l-3 3z" fill="#666" /></svg></button>
            <input type="text" aria-label="命令" placeholder="键入命令">
            <button type="button" aria-label="展开历史"><svg width="8" height="4" viewBox="0 0 8 4"><path d="M0 4h8l-4-4z" fill="#222" /></svg></button>
        </form>
    </div>
</body>

</html>
```
FILE: styles.css
```css
* {
    box-sizing: border-box;
}

body {
    margin: 0;
    height: 100vh;
    display: flex;
    flex-direction: column;
    overflow: hidden;
    background: #212830;
    color: #f0f0f0;
    font-family: "Open Sans", "Noto Sans CJK SC", sans-serif;
    font-size: 12px;
    line-height: 17px;
}

button,
input,
select {
    font: inherit;
    color: inherit;
    background: none;
    border: 0;
    padding: 0;
    margin: 0;
}

a {
    color: inherit;
    text-decoration: none;
}

svg {
    display: block;
    flex: none;
}

.defs {
    position: absolute;
}

/* small drop-down arrow */
.caret {
    flex: none;
    width: 6px;
    height: 3px;
    background: #f0f0f0;
    clip-path: polygon(0 0, 100% 0, 50% 100%);
}

.caret.wide {
    width: 8px;
    height: 4px;
}

.caret.dark {
    background: #34383c;
}

.dim {
    opacity: 0.6;
}

/* title bar and ribbon tabs */
.top {
    flex: none;
    display: grid;
    grid-template-columns: 41px 1fr;
    grid-template-rows: 24px 20px;
    background: #535353;
}

.app-button {
    grid-row: span 2;
    height: 41px;
    border: 1px solid #111;
    background: linear-gradient(#a3a3a3, #5e5e5e);
}

.titlebar {
    display: flex;
    border-bottom: 1px solid #2b2b2b;
}

.quick {
    display: flex;
    align-items: center;
    gap: 6px;
    padding: 0 4px 0 8px;
    background: linear-gradient(#878787, #5a5a5a);
}

.quick .caret {
    margin: 0 2px 0 0;
}

.aero {
    border-bottom: 1px solid #9fc3cc;
    background: #28667a;
}

.caption {
    flex: 1;
    display: flex;
    justify-content: center;
    gap: 17px;
    line-height: 22px;
    color: #0c0c0c;
    font-size: 13px;
    text-shadow: 0 0 6px #9dc4cc, 0 0 8px #9dc4cc;
    background: linear-gradient(90deg, #23505e, #3f8194 8%, #2b7187 20%, #2a7186 52%, #1d4c59 75%, #2b6c7b 82%, #194552 92%, #1f5562);
}

.infocenter {
    display: flex;
    align-items: center;
    gap: 6px;
    padding-right: 3px;
    background: linear-gradient(#979797, #5c5c5c);
}

.fold {
    width: 13px;
    height: 23px;
    padding-left: 4px;
    margin-right: -6px;
    background: linear-gradient(#999, #666);
}

.search {
    width: 179px;
    height: 22px;
    padding: 0 3px;
    border: 1px solid #333;
    background: #727272;
    font-style: italic;
}

.search::placeholder {
    color: #c6c6c6;
    opacity: 1;
}

.login {
    display: flex;
    align-items: center;
    gap: 5px;
    margin-right: 52px;
}

.cart {
    margin-left: 4px;
}

.help {
    width: 16px;
    height: 16px;
    margin-left: 12px;
    margin-right: 1px;
    border-radius: 50%;
    background: #eef1f6;
    color: #1f4fa5;
    font-weight: bold;
    font-size: 13px;
    line-height: 15px;
    outline: 1px solid #444;
}

.window-buttons {
    display: flex;
    padding-left: 17px;
    background: linear-gradient(90deg, #2f6272, #5c8ea2 8%, #4b7c90);
}

.window-buttons button {
    width: 28px;
    height: 18px;
    display: flex;
    align-items: center;
    justify-content: center;
    border: 1px solid #c3d2da;
    border-top: 0;
    border-right: 0;
    background: linear-gradient(#a9bcc6, #6f8b9b 45%, #52717f 50%, #7594a2);
}

.window-buttons button:first-child {
    border-bottom-left-radius: 4px;
}

.window-buttons .close {
    width: 42px;
    background: linear-gradient(#dd9c88, #cb5f45 45%, #b5290f 50%, #cf5a35);
}

.ribbon-tabs {
    display: flex;
    gap: 4px;
    padding-left: 5px;
    color: #ccc;
}

.ribbon-tabs a {
    padding: 3px 8px 0;
}

.ribbon-tabs .active {
    margin-top: 3px;
    padding: 0 7px;
    border: 1px solid #2b2b2b;
    border-bottom: 0;
    border-radius: 2px 2px 0 0;
    background: linear-gradient(#777, #646464);
    color: #fff;
}

.ribbon-tabs button {
    padding-left: 20px;
}

/* ribbon */
.ribbon {
    flex: none;
    display: flex;
    padding-left: 1px;
    border-top: 1px solid #2b2b2b;
    border-bottom: 1px solid #8a8a8a;
    background: linear-gradient(#505050, #3a3a3a);
}

.panel {
    flex: none;
    border-right: 1px solid #3a3a3a;
    border-left: 1px solid #6a6a6a;
    background: #5d5d5d;
}

.draw {
    width: 210px;
}

.modify {
    width: 227px;
}

.annotate {
    width: 157px;
}

.layers {
    width: 252px;
}

.block {
    width: 133px;
}

.props {
    width: 245px;
}

.group {
    width: 68px;
}

.utils,
.clip {
    width: 76px;
}

.view {
    width: 60px;
}

.panel h2 {
    display: flex;
    align-items: center;
    justify-content: center;
    margin: 0;
    height: 18px;
    background: linear-gradient(#4b4b4b, #545454);
    font-size: 12px;
    font-weight: normal;
}

.panel h2 button {
    display: flex;
    align-items: center;
    gap: 7px;
}

.panel h2 .launcher {
    margin-left: 8px;
}

.props h2 button:first-child {
    margin-left: auto;
}

.props h2 .launcher {
    margin-left: auto;
    margin-right: 4px;
}

.tools {
    display: flex;
    height: 79px;
    padding: 4px 0 0 2px;
}

.big {
    display: flex;
    flex-direction: column;
    align-items: center;
    width: 40px;
    height: 73px;
    text-align: center;
    line-height: 17px;
}

.big svg {
    margin-bottom: 6px;
}

.big .caret {
    margin-top: 2px;
}

.big.arc {
    width: 44px;
}

.rows {
    display: grid;
    grid-template-rows: repeat(3, 24px);
    justify-items: start;
}

.draw .tools {
    padding-left: 1px;
}

.draw .rows {
    margin-left: 6px;
}

.four {
    grid-template-columns: 60px 58px 76px 16px;
    margin-left: 4px;
}

.tool {
    display: flex;
    align-items: center;
    gap: 6px;
    height: 24px;
    white-space: nowrap;
}

.tool .caret {
    margin-left: 5px;
}

.tight .caret,
.draw .tool .caret,
.annotate .tool .caret,
.block .tool .caret {
    margin-left: 1px;
}

.glyph-a {
    fill: #e8e8e8;
    font-family: "Liberation Sans", sans-serif;
    font-size: 36px;
    text-anchor: middle;
}

.annotate .big {
    width: 42px;
}

.annotate .big svg,
.viewcube svg {
    overflow: visible;
}

.annotate .tools {
    padding-left: 4px;
}

.annotate .rows {
    margin-left: 3px;
}

.layer-side {
    padding-top: 1px;
}

.layers .big {
    width: 36px;
}

.layers .tools {
    gap: 2px;
}

.combo {
    position: relative;
    display: flex;
    align-items: center;
    height: 22px;
    padding-left: 4px;
    border: 1px solid #333;
    background: linear-gradient(#575757, #727272);
}

.layers .combo {
    width: 208px;
    margin-bottom: 1px;
    padding-left: 3px;
}

.combo select {
    flex: 1;
    min-width: 0;
    appearance: none;
    padding-left: 3px;
}

.combo::after {
    content: "";
    position: absolute;
    right: 2px;
    top: 8px;
    width: 8px;
    height: 4px;
    background: #f0f0f0;
    clip-path: polygon(0 0, 100% 0, 50% 100%);
    pointer-events: none;
}

.icon-row {
    display: flex;
    align-items: center;
    gap: 8px;
    height: 24px;
    padding-left: 4px;
}

.block .tools {
    padding-left: 0;
}

.block .rows {
    margin-left: 3px;
}

.block .tool {
    gap: 6px;
}

.props .tools {
    gap: 2px;
    padding-left: 1px;
}

.prop-grid {
    flex: 1;
    display: grid;
    grid-template-columns: 16px 180px;
    grid-template-rows: repeat(3, 24px);
    align-items: center;
    column-gap: 2px;
}

.prop-grid label:first-of-type select {
    padding-left: 4px;
}

.group .rows {
    margin-left: 0;
}

.group .tools {
    padding-left: 0;
}

.group .tool {
    width: 24px;
    justify-content: center;
}

.pressed {
    border: 1px solid #2c3f66;
    background: linear-gradient(#7c97c9, #5a77ae);
}

.utils .tools,
.clip .tools {
    padding-left: 4px;
}

.utils .rows,
.clip .rows {
    margin-left: 8px;
}

.view .tools {
    padding-left: 9px;
}

/* drawing tabs */
.file-tabs {
    flex: none;
    display: flex;
    align-items: flex-end;
    height: 30px;
    padding-left: 16px;
    border-bottom: 4px solid #5c5c5c;
    background: #383838;
}

.file-tab {
    display: grid;
    align-items: center;
    color: #b8b8b8;
}

.file-tab > * {
    grid-area: 1 / 1;
}

.file-tab span {
    padding-left: 16px;
}

.current {
    margin-left: -5px;
    color: #fff;
}

.current span {
    padding-left: 14px;
}

.current .close-x {
    justify-self: end;
    margin-right: 19px;
}

.new-tab {
    margin-bottom: 3px;
}

/* model space */
.canvas {
    position: relative;
    flex: 1;
    min-height: 0;
}

.drawing {
    width: 100%;
    height: 100%;
}

.outline {
    fill: none;
    stroke: #f4f4f4;
    stroke-width: 1px;
}

#panelTabs,
#panelSlots,
#lid {
    vector-effect: non-scaling-stroke;
}

.dimension {
    fill: none;
    stroke: #a3a6a9;
    stroke-width: 1px;
}

.dimension-text {
    fill: #fff;
    font-family: "Liberation Sans", sans-serif;
    font-size: 37px;
    text-anchor: middle;
}

.ucs path {
    fill: none;
    stroke: #f0f0f0;
}

.ucs text {
    fill: #fff;
    font-family: Lato, sans-serif;
    font-weight: 300;
    font-size: 19px;
    text-anchor: middle;
}

.view-label {
    position: absolute;
    left: 3px;
    top: 5px;
}

.doc-buttons {
    position: absolute;
    top: 9px;
    right: 10px;
    display: flex;
    gap: 8px;
}

.viewcube {
    position: absolute;
    top: 30px;
    right: 17px;
    display: flex;
    flex-direction: column;
    align-items: center;
    gap: 11px;
}

.viewcube text {
    fill: #b4b4b4;
    font-family: "Noto Sans CJK SC", sans-serif;
    font-size: 19px;
    text-anchor: middle;
}

.viewcube .face {
    fill: #4d545e;
    font-weight: 300;
    font-size: 32px;
}

.wcs {
    display: flex;
    align-items: center;
    justify-content: space-between;
    width: 48px;
    height: 18px;
    padding: 0 4px;
    border: 1px solid #a6a7b6;
    border-radius: 4px;
    background: #8d8e9c;
    color: #54555f;
    font-family: "Liberation Sans", sans-serif;
    font-size: 10px;
}

.navbar {
    position: absolute;
    top: 236px;
    right: 4px;
    width: 32px;
    height: 212px;
    display: flex;
    flex-direction: column;
    align-items: center;
    gap: 5px;
    border: 1px solid #6c7073;
    border-radius: 3px;
    background: #5b5f62;
}

.navbar svg {
    fill: #5a606a;
    stroke: #3f444a;
    stroke-width: 1.2px;
}

.navbar .corner {
    align-self: flex-end;
    padding: 1px;
}

.navbar .corner:last-child {
    margin-top: auto;
}

.navbar .ruled {
    border-top: 1px solid #686c70;
    padding: 4px 1px 0;
}

.command {
    position: absolute;
    left: 21%;
    width: 58.5%;
    bottom: 0;
    height: 27px;
    display: flex;
    align-items: center;
    border: 1px solid #66696c;
    background: #bcbdbf;
}

.command-grip {
    display: flex;
    align-items: center;
    align-self: stretch;
    gap: 8px;
    width: 53px;
    padding-left: 1px;
    background: linear-gradient(#6a6a6a, #3a3a3a);
}

.recent {
    padding: 0 5px;
}

.command input {
    flex: 1;
    padding-left: 3px;
    color: #222;
}

.command input::placeholder {
    color: #7c7d80;
    font-style: italic;
    opacity: 1;
}

.command > button:last-child {
    padding: 0 4px;
}
```
